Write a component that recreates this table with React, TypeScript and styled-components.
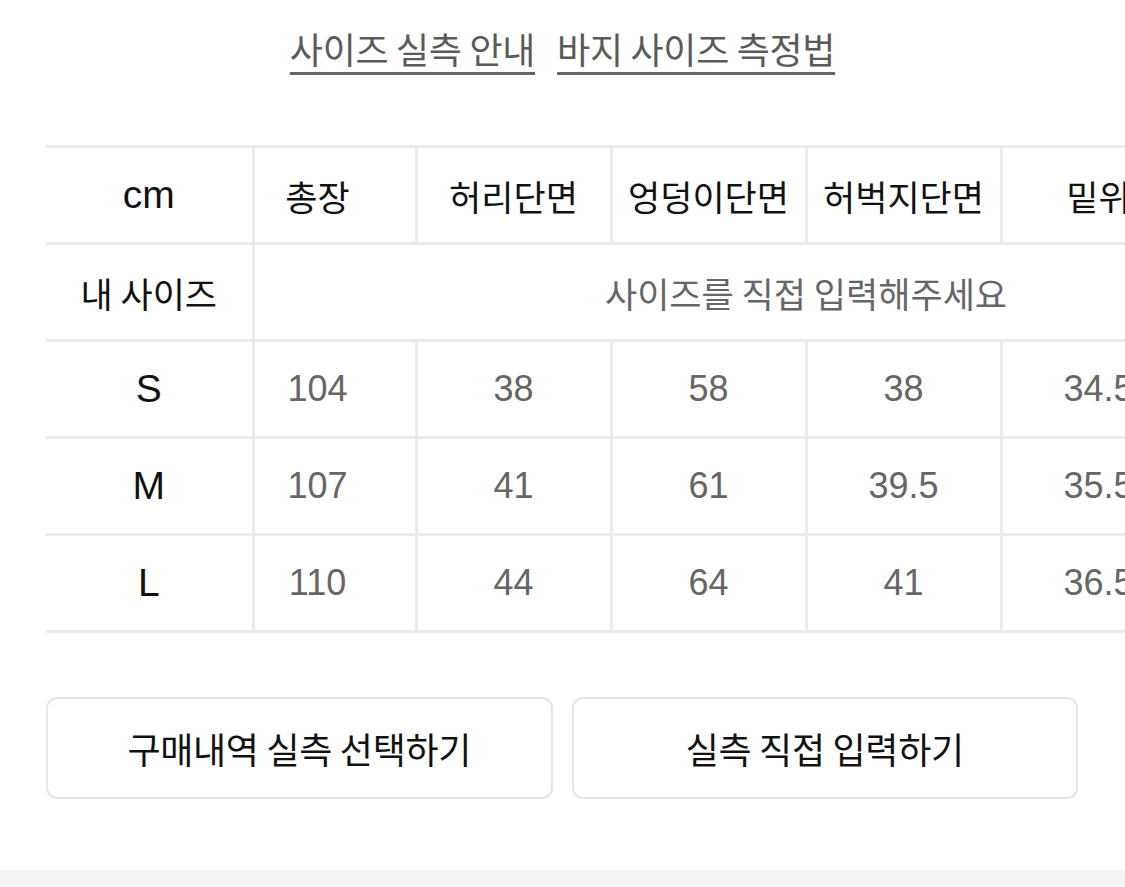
import React from "react";
import styled, { createGlobalStyle } from "styled-components";

const Global = createGlobalStyle`
  html, body { margin: 0; padding: 0; background: #fff; }
  body { font-family: "Noto Sans CJK KR", "Noto Sans", sans-serif; }
`;

const Page = styled.div`
  width: 1125px;
  height: 887px;
  overflow: hidden;
  display: flex;
  flex-direction: column;
  background: #fff;
`;

const LinkBar = styled.div`
  display: flex;
  justify-content: center;
  gap: 22px;
  height: 145px;
  padding-top: 22px;
  box-sizing: border-box;
`;

const GuideLink = styled.a`
  font-family: "Noto Sans CJK KR", sans-serif;
  font-size: 36px;
  line-height: 52px;
  height: 52px;
  color: #5a5a5a;
  text-decoration: underline;
  text-decoration-thickness: 3px;
  text-underline-offset: 8px;
  text-decoration-color: #666;
  letter-spacing: -0.3px;
  cursor: pointer;
`;

const TableWrap = styled.div`
  padding-left: 46px;
  width: 1400px;
`;

const SizeTable = styled.table`
  border-collapse: collapse;
  table-layout: fixed;
  width: 1313px;
`;

const Cell = styled.td<{
  $first?: boolean;
  $muted?: boolean;
  $latin?: boolean;
  $shift?: boolean;
}>`
  height: 97px;
  padding: 0 ${(p) => (p.$shift ? "34px" : "0")} 0 0;
  border: 3px solid #ebebeb;
  border-left: ${(p) => (p.$first ? "none" : "3px solid #ebebeb")};
  text-align: center;
  vertical-align: middle;
  font-family: ${(p) =>
    p.$latin ? `"Liberation Sans", Arial, sans-serif` : `"Noto Sans CJK KR", sans-serif`};
  font-size: ${(p) => (p.$latin ? (p.$first ? "39px" : "36px") : "35px")};
  color: ${(p) => (p.$muted ? "#666" : "#111")};
  white-space: nowrap;
  box-sizing: border-box;
`;

const ButtonRow = styled.div`
  display: grid;
  grid-template-columns: 1fr 1fr;
  gap: 19px;
  padding: 0 47px 0 46px;
  margin-top: 64px;
`;

const ActionButton = styled.button`
  height: 102px;
  border: 2px solid #e6e6e6;
  border-radius: 11px;
  background: #fff;
  font-family: "Noto Sans CJK KR", sans-serif;
  font-size: 36px;
  color: #111;
  cursor: pointer;
  letter-spacing: -0.3px;
`;

const BottomBand = styled.div`
  margin-top: auto;
  height: 17px;
  background: #f4f4f4;
`;

const colWidths = [207, 163, 195, 195, 195, 195, 163];
const headers = ["총장", "허리단면", "엉덩이단면", "허벅지단면", "밑위", "밑단단면"];
const rows: { size: string; values: string[] }[] = [
  { size: "S", values: ["104", "38", "58", "38", "34.5", "17"] },
  { size: "M", values: ["107", "41", "61", "39.5", "35.5", "18"] },
  { size: "L", values: ["110", "44", "64", "41", "36.5", "19"] },
];

export default function App() {
  return (
    <Page>
      <Global />
      <LinkBar>
        <GuideLink>사이즈 실측 안내</GuideLink>
        <GuideLink>바지 사이즈 측정법</GuideLink>
      </LinkBar>
      <TableWrap>
        <SizeTable>
          <colgroup>
            {colWidths.map((w, i) => (
              <col key={i} style={{ width: w }} />
            ))}
          </colgroup>
          <tbody>
            <tr>
              <Cell $first $latin>cm</Cell>
              {headers.map((h, i) => (
                <Cell key={h} $shift={i === 0}>
                  {h}
                </Cell>
              ))}
            </tr>
            <tr>
              <Cell $first>내 사이즈</Cell>
              <Cell colSpan={6} $muted>
                사이즈를 직접 입력해주세요
              </Cell>
            </tr>
            {rows.map((r) => (
              <tr key={r.size}>
                <Cell $first $latin>{r.size}</Cell>
                {r.values.map((v, i) => (
                  <Cell key={i} $latin $muted $shift={i === 0}>
                    {v}
                  </Cell>
                ))}
              </tr>
            ))}
          </tbody>
        </SizeTable>
      </TableWrap>
      <ButtonRow>
        <ActionButton>구매내역 실측 선택하기</ActionButton>
        <ActionButton>실측 직접 입력하기</ActionButton>
      </ButtonRow>
      <BottomBand />
    </Page>
  );
}
